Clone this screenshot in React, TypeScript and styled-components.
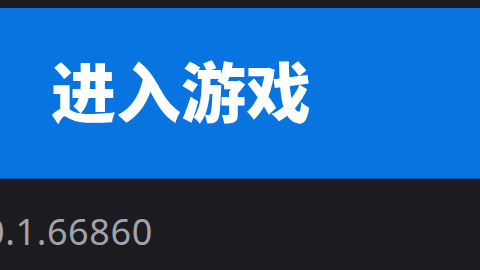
import React from "react";
import styled, { createGlobalStyle } from "styled-components";

const Global = createGlobalStyle`
  html, body { margin: 0; padding: 0; background: #1c1b20; }
  body { width: 480px; height: 270px; overflow: hidden; }
`;

const Page = styled.div`
  width: 480px;
  height: 270px;
  display: flex;
  flex-direction: column;
  padding-top: 8px;
  box-sizing: border-box;
  background: #1c1b20;
  overflow: hidden;
`;

const EnterButton = styled.div`
  height: 171px;
  background: #0874e0;
  display: flex;
  align-items: center;
  padding-left: 51px;
  box-sizing: border-box;
  border-bottom: 1px solid #0a4f9a;
`;

const Label = styled.span`
  color: #ffffff;
  font-family: "Noto Sans CJK SC", "Noto Sans", sans-serif;
  font-weight: 900;
  font-size: 65px;
  line-height: 1;
  margin-top: -8px;
`;

const Version = styled.div`
  margin-top: 35px;
  margin-left: -16px;
  color: #a3a3aa;
  font-family: "Noto Sans", "Open Sans", sans-serif;
  font-size: 36px;
  letter-spacing: 0.6px;
  line-height: 1;
  white-space: nowrap;
`;

export default function App() {
  return (
    <>
      <Global />
      <Page>
        <EnterButton>
          <Label>进入游戏</Label>
        </EnterButton>
        <Version>0.1.66860</Version>
      </Page>
    </>
  );
}
